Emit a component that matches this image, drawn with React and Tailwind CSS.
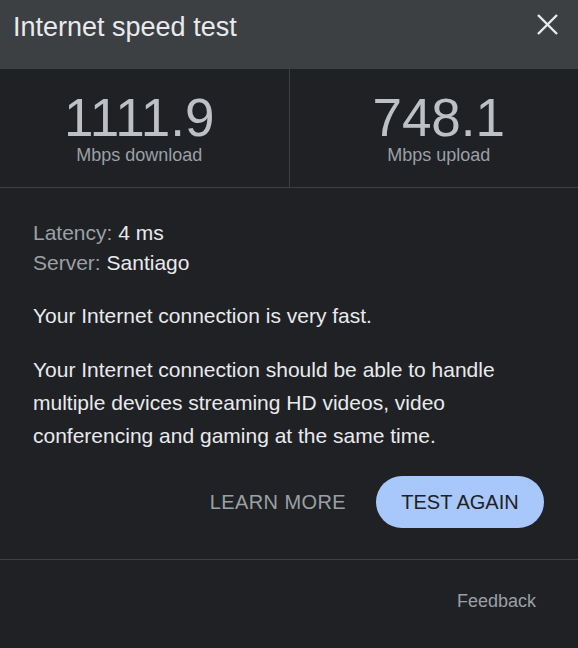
import React from 'react';

const CloseIcon = () => (
  <svg viewBox="0 0 21 21" className="w-[21px] h-[21px] mt-[2px]" fill="none" stroke="#e8eaed" strokeWidth="2.4">
    <line x1="1" y1="1" x2="20" y2="20" />
    <line x1="20" y1="1" x2="1" y2="20" />
  </svg>
);

const Stat = ({ value, label, className }) => (
  <div className={`flex-1 flex flex-col items-center pt-[22px] pb-[22px] ${className}`}>
    <div className="text-[53px] leading-[54px] text-[#bdc1c6]">{value}</div>
    <div className="text-[18px] leading-[20px] text-[#9aa0a6]">{label}</div>
  </div>
);

export default function App() {
  return (
    <div className="min-h-screen w-full bg-[#202124] text-[#e8eaed] font-['Liberation_Sans',Arial,sans-serif]">
      <div className="h-[69px] bg-[#3c4043] flex items-start justify-between pl-[13px] pr-[20px] pt-[12px]">
        <h1 className="text-[27px] leading-[30px] text-[#e8eaed]">Internet speed test</h1>
        <CloseIcon />
      </div>

      <div className="flex border-b border-[#3c4043]">
        <Stat value="1111.9" label="Mbps download" className="pr-[10px] border-r border-[#3c4043]" />
        <Stat value="748.1" label="Mbps upload" className="pl-[10px]" />
      </div>

      <div className="pl-[33px] pr-[34px] pt-[30px] pb-[31px] border-b border-[#3c4043]">
        <div className="text-[21px] leading-[30px]">
          <div><span className="text-[#9aa0a6]">Latency: </span>4 ms</div>
          <div><span className="text-[#9aa0a6]">Server: </span>Santiago</div>
        </div>
        <p className="mt-[23px] text-[21px] leading-[30px]">Your Internet connection is very fast.</p>
        <p className="mt-[22px] text-[21px] leading-[33px]">
          Your Internet connection should be able to handle multiple devices streaming HD videos, video conferencing and gaming at the same time.
        </p>
        <div className="mt-[24px] flex items-center justify-end gap-[30px]">
          <button className="text-[20px] tracking-[0.4px] text-[#9aa0a6] uppercase">Learn more</button>
          <button className="h-[52px] w-[168px] rounded-full bg-[#a8c7fa] text-[#202124] text-[20px] uppercase">Test again</button>
        </div>
      </div>

      <div className="flex justify-end pr-[42px] pt-[31px]">
        <span className="text-[18px] leading-[20px] text-[#9aa0a6]">Feedback</span>
      </div>
    </div>
  );
}
